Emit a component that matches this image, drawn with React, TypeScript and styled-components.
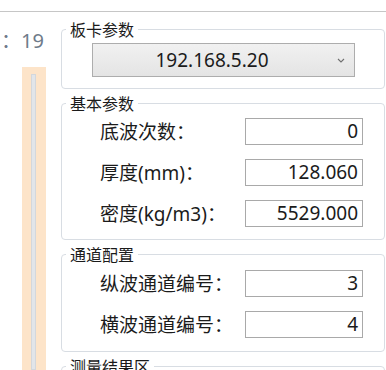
import React from "react";
import styled, { createGlobalStyle } from "styled-components";

const GlobalStyle = createGlobalStyle`
  html, body {
    margin: 0;
    padding: 0;
    background: #ffffff;
  }
  body {
    font-family: "Noto Sans", "Noto Sans CJK SC", sans-serif;
    color: #1b1b1b;
  }
`;

interface ParamRow {
  readonly label: string;
  readonly value: string;
}

const basicParams: ParamRow[] = [
  { label: "底波次数：", value: "0" },
  { label: "厚度(mm)：", value: "128.060" },
  { label: "密度(kg/m3)：", value: "5529.000" },
];

const channelParams: ParamRow[] = [
  { label: "纵波通道编号：", value: "3" },
  { label: "横波通道编号：", value: "4" },
];

export default function App() {
  return (
    <Page>
      <GlobalStyle />
      <TopStrip />
      <Main>
        <SideColumn>
          <CountText>：19</CountText>
          <Slider>
            <SliderTrack />
          </Slider>
        </SideColumn>
        <Groups>
          <Group>
            <Title>板卡参数</Title>
            <CardBody>
              <Combo>
                <ComboText>192.168.5.20</ComboText>
                <ComboArrow>
                  <svg width="8" height="5" viewBox="0 0 8 5">
                    <path d="M1 1 L4 4 L7 1" fill="none" stroke="#6f6f6f" strokeWidth="1.1" />
                  </svg>
                </ComboArrow>
              </Combo>
            </CardBody>
          </Group>
          <Group>
            <Title>基本参数</Title>
            <FieldBody $top={5} $bottom={12}>
              {basicParams.map(p => (
                <FieldRow key={p.label}>
                  <FieldLabel>{p.label}</FieldLabel>
                  <FieldInput>{p.value}</FieldInput>
                </FieldRow>
              ))}
            </FieldBody>
          </Group>
          <Group>
            <Title>通道配置</Title>
            <FieldBody $top={6} $bottom={13}>
              {channelParams.map(p => (
                <FieldRow key={p.label}>
                  <FieldLabel>{p.label}</FieldLabel>
                  <FieldInput>{p.value}</FieldInput>
                </FieldRow>
              ))}
            </FieldBody>
          </Group>
          <Group>
            <Title>测量结果区</Title>
            <FieldBody $top={6} $bottom={14}>
              <Spacer />
            </FieldBody>
          </Group>
        </Groups>
      </Main>
    </Page>
  );
}

const Page = styled.div`
  width: 386px;
  height: 370px;
  overflow: hidden;
  display: flex;
  flex-direction: column;
`;

const TopStrip = styled.div`
  height: 11px;
  flex: none;
  border-bottom: 1px solid #c6c6c6;
`;

const Main = styled.div`
  flex: 1;
  display: flex;
  min-height: 0;
`;

const SideColumn = styled.div`
  width: 61px;
  flex: none;
  display: flex;
  flex-direction: column;
`;

const CountText = styled.div`
  margin: 17px 0 0 1px;
  height: 24px;
  line-height: 24px;
  font-size: 20px;
  color: #6f7b8a;
  white-space: nowrap;
`;

const Slider = styled.div`
  margin: 14px 0 0 22px;
  width: 24px;
  flex: 1;
  background: #fde4c9;
  display: flex;
  justify-content: center;
  padding-top: 7px;
`;

const SliderTrack = styled.div`
  width: 5px;
  margin-left: -2px;
  background: #e2e5e9;
  box-shadow: inset 0 0 0 1px #d3d7dc;
`;

const Groups = styled.div`
  flex: 1;
  display: flex;
  flex-direction: column;
  gap: 4px;
  padding: 7px 1px 0 0;
`;

const Group = styled.fieldset`
  margin: 0;
  padding: 0;
  min-width: 0;
  border: 1px solid #d8dde3;
  border-radius: 4px;
  flex: none;
`;

const Title = styled.legend`
  margin-left: 4px;
  padding: 0 4px;
  font-size: 16px;
  line-height: 20px;
  color: #1b1b1b;
  font-family: "Noto Sans CJK SC", sans-serif;
`;

const CardBody = styled.div`
  padding: 4px 29px 11px 30px;
`;

const Combo = styled.div`
  height: 34px;
  box-sizing: border-box;
  border: 1px solid #adadad;
  background: linear-gradient(#f1f1f1, #e4e4e4);
  display: flex;
  align-items: center;
`;

const ComboText = styled.div`
  flex: 1;
  text-align: center;
  font-size: 19px;
  line-height: 24px;
  color: #1b1b1b;
`;

const ComboArrow = styled.div`
  width: 23px;
  display: flex;
  justify-content: flex-start;
  padding-left: 6px;
  box-sizing: border-box;
`;

const FieldBody = styled.div<{ $top: number; $bottom: number }>`
  padding: ${({ $top }) => $top}px 21px ${({ $bottom }) => $bottom}px 38px;
  display: flex;
  flex-direction: column;
  gap: 14px;
`;

const FieldRow = styled.div`
  display: flex;
  align-items: center;
  justify-content: space-between;
  height: 27px;
`;

const FieldLabel = styled.span`
  font-size: 19px;
  line-height: 24px;
  color: #1b1b1b;
  white-space: nowrap;
`;

const FieldInput = styled.div`
  width: 118px;
  height: 27px;
  box-sizing: border-box;
  border: 1px solid #a9a9a9;
  padding: 0 4px;
  text-align: right;
  font-size: 19px;
  line-height: 25px;
  color: #1b1b1b;
  background: #ffffff;
`;

const Spacer = styled.div`
  height: 80px;
`;
